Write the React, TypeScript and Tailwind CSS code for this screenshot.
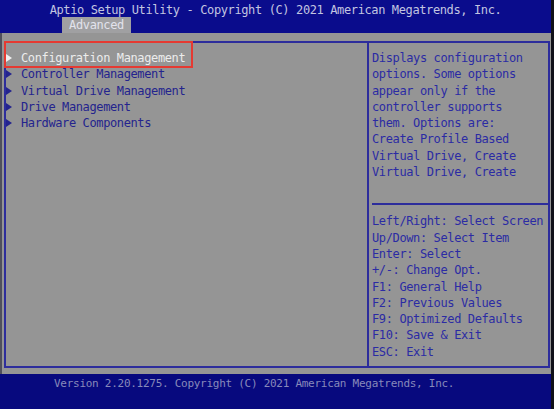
const menu = [
  "Configuration Management",
  "Controller Management",
  "Virtual Drive Management",
  "Drive Management",
  "Hardware Components",
];

const help = [
  "Displays configuration",
  "options. Some options",
  "appear only if the",
  "controller supports",
  "them. Options are:",
  "Create Profile Based",
  "Virtual Drive, Create",
  "Virtual Drive, Create",
];

const keys = [
  "Left/Right: Select Screen",
  "Up/Down: Select Item",
  "Enter: Select",
  "+/-: Change Opt.",
  "F1: General Help",
  "F2: Previous Values",
  "F9: Optimized Defaults",
  "F10: Save & Exit",
  "ESC: Exit",
];

function Arrow({ active }: { active: boolean }) {
  return (
    <svg width="6" height="8" viewBox="0 0 6 8" className="shrink-0">
      <polygon points="0,0 6,4 0,8" fill={active ? "#f0f0f0" : "#24248e"} />
    </svg>
  );
}

export default function App() {
  return (
    <div className="w-[554px] h-[409px] flex flex-col overflow-hidden bg-[#101018] font-['DejaVu_Sans_Mono','Liberation_Mono',monospace] text-[12px] tracking-[-0.38px] whitespace-pre">
      {/* title bar with the tab strip */}
      <header className="h-[33px] mr-[3px] bg-[#0a0c8c] flex flex-col">
        <div className="h-[17px] leading-[20px] text-center text-[#c2c5e0]">
          Aptio Setup Utility - Copyright (C) 2021 American Megatrends, Inc.
        </div>
        <div className="flex pl-[62px]">
          <div className="w-[69px] h-[16px] bg-[#a0a0a2] text-[#e2e3ec] text-center leading-[17px]">
            Advanced
          </div>
        </div>
      </header>

      <main className="flex-1 mr-[3px] bg-[#959595] border-l-[2px] border-[#50505c] pl-[2px] pr-[1px] pt-[8px] pb-[6px]">
        <div className="relative h-full border-[2px] border-[#2d2d9c] flex">
          <div className="absolute left-[-2px] top-[-2px] w-[189px] h-[27px] border-[2px] border-[#e53a32]" />

          <div className="w-[361px] pt-[7px] leading-[16.3px]">
            {menu.map((item, i) => (
              <div key={item} className="flex items-center h-[16.3px]">
                <Arrow active={i === 0} />
                <span className={`ml-[9px] ${i === 0 ? "text-[#ececec]" : "text-[#24248e]"}`}>{item}</span>
              </div>
            ))}
          </div>

          <aside className="flex-1 border-l-[2px] border-[#2d2d9c] flex flex-col pt-[7px] leading-[16.3px] text-[#2b2ba4]">
            <div className="pl-[3px] h-[130.4px]">
              {help.map((line, i) => (
                <div key={i}>{line}</div>
              ))}
            </div>
            <div className="mt-[23px] ml-[3px] border-t-[2px] border-[#2d2d9c]" />
            <div className="pl-[3px] pt-[8px]">
              {keys.map((line) => (
                <div key={line}>{line}</div>
              ))}
            </div>
          </aside>
        </div>
      </main>

      <footer className="h-[35px] mr-[3px] bg-[#07097e] pl-[54px] pt-[2px] text-[11px] tracking-[-0.27px] leading-[16px] text-[#878aba]">
        Version 2.20.1275. Copyright (C) 2021 American Megatrends, Inc.
      </footer>
    </div>
  );
}
